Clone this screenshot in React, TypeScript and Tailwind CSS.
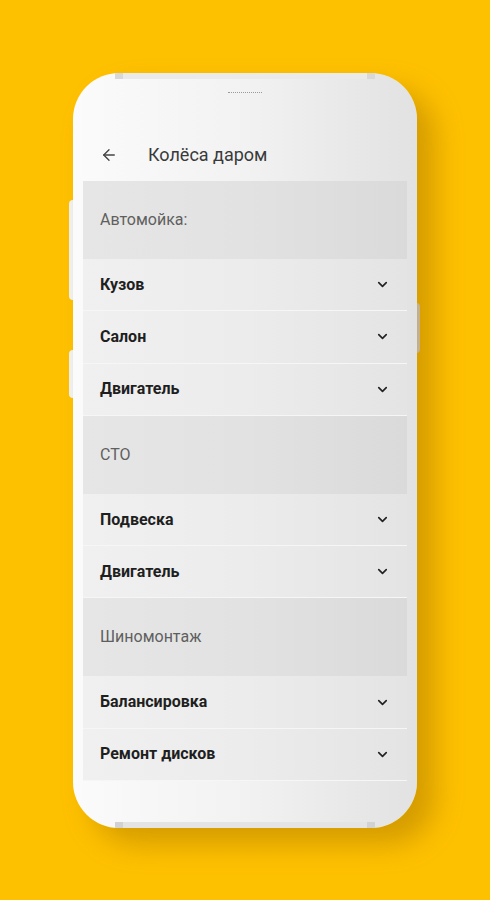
import { ArrowLeft, ChevronDown } from "lucide-react";

type Block =
  | { kind: "section"; title: string }
  | { kind: "row"; title: string };

const blocks: Block[] = [
  { kind: "section", title: "Автомойка:" },
  { kind: "row", title: "Кузов" },
  { kind: "row", title: "Салон" },
  { kind: "row", title: "Двигатель" },
  { kind: "section", title: "СТО" },
  { kind: "row", title: "Подвеска" },
  { kind: "row", title: "Двигатель" },
  { kind: "section", title: "Шиномонтаж" },
  { kind: "row", title: "Балансировка" },
  { kind: "row", title: "Ремонт дисков" },
];

function SectionHeader({ title }: { title: string }) {
  return (
    <div className="flex h-[78px] items-center bg-gradient-to-r from-[#e6e6e6] via-[#e2e2e2] to-[#dadada] px-[17px] text-[16px] text-[#5f5f5f]">
      {title}
    </div>
  );
}

function Row({ title }: { title: string }) {
  return (
    <div className="flex h-[52.3px] items-center justify-between border-b border-[#f6f6f6] bg-gradient-to-r from-[#f0f0f0] via-[#ececec] to-[#e4e4e4] px-[17px]">
      <span className="text-[16px] font-bold text-[#1f1f1f]">{title}</span>
      <ChevronDown size={15} strokeWidth={2.6} className="text-[#222]" />
    </div>
  );
}

export default function App() {
  return (
    <div
      className="relative h-[900px] w-[490px] overflow-hidden bg-[#fec100]"
      style={{ fontFamily: "Roboto, 'Noto Sans', sans-serif" }}
    >
      {/* side buttons */}
      <div className="absolute left-[69px] top-[200px] h-[100px] w-[6px] rounded-l-sm bg-[#f2f2f2]" />
      <div className="absolute left-[69px] top-[350px] h-[48px] w-[6px] rounded-l-sm bg-[#f2f2f2]" />
      <div className="absolute left-[414px] top-[303px] h-[50px] w-[6px] rounded-r-sm bg-[#dcdcdc]" />

      <div className="relative ml-[73px] mt-[73px] h-[755px] w-[344px] overflow-hidden rounded-[46px] bg-gradient-to-r from-[#fbfbfb] via-[#f2f2f2] to-[#e2e2e2] shadow-[18px_16px_28px_rgba(150,100,0,0.4)]">
        {/* top frame strip */}
        <div className="mx-auto flex h-[6px] w-[260px] justify-between bg-[#eaeaea]">
          <div className="h-[6px] w-[8px] bg-[#d8d8d8]" />
          <div className="h-[6px] w-[8px] bg-[#d8d8d8]" />
        </div>
        {/* speaker */}
        <div className="mx-auto mt-[13px] h-[2px] w-[34px] border-t border-dotted border-[#9a9a9a]" />

        <div className="mx-[10px]">
          <div className="flex h-[87px] items-end pb-[16px]">
            <ArrowLeft size={18} strokeWidth={1.8} className="mb-[1px] ml-[17px] text-[#444]" />
            <span className="ml-[30px] text-[18px] leading-[20px] text-[#3a3a3a]">Колёса даром</span>
          </div>

          {blocks.map((b, i) =>
            b.kind === "section" ? (
              <SectionHeader key={i} title={b.title} />
            ) : (
              <Row key={i} title={b.title} />
            )
          )}
        </div>

        {/* bottom frame strip */}
        <div className="absolute bottom-0 left-1/2 flex h-[6px] w-[260px] -translate-x-1/2 justify-between bg-[#e4e4e4]">
          <div className="h-[6px] w-[8px] bg-[#d2d2d2]" />
          <div className="h-[6px] w-[8px] bg-[#d2d2d2]" />
        </div>
      </div>
    </div>
  );
}
